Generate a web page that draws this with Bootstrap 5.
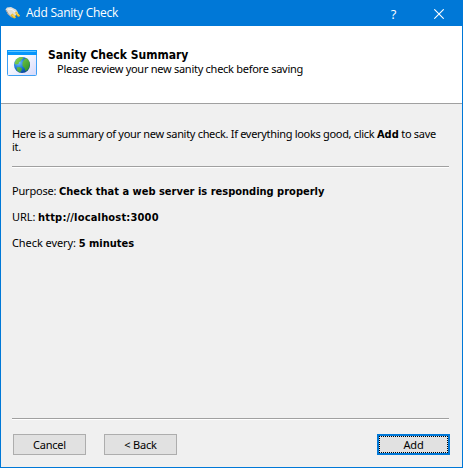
<!DOCTYPE html>
<html lang="en">
<head>
<meta charset="utf-8">
<meta name="viewport" content="width=device-width, initial-scale=1">
<title>Add Sanity Check</title>
<link href="https://cdn.jsdelivr.net/npm/bootstrap@5.3.0/dist/css/bootstrap.min.css" rel="stylesheet">
<style>
body { font: 11px/13px "Noto Sans", sans-serif; letter-spacing: -.31px; color: #000; background: #f0f0f0; overflow: hidden; }
strong { font-family: "DejaVu Sans Condensed", "DejaVu Sans", sans-serif; font-stretch: condensed; font-weight: 700; font-size: 11px; line-height: 0; letter-spacing: 0; }
.window { width: 463px; height: 468px; border: 1px solid #0078d7; }
.titlebar { height: 25px; background: #0078d7; color: #fff; font: 12px/24px "Open Sans", sans-serif; letter-spacing: -.25px; padding: 0 1px 0 4px; }
.titlebar .caption { margin-left: 5px; }
.tool { width: 45px; height: 25px; border: 0; padding: 0; background: none; color: #fff; font-size: 13px; line-height: 24px; }
.banner { height: 78px; background: #fff; border-bottom: 1px solid #a0a0a0; padding: 22px 6px 0; }
.heading-row { padding-left: 11px; height: 14px; }
.subheading-row { padding-left: 20px; letter-spacing: -.27px; }
.heading { font-size: 12px; letter-spacing: 0; }
.content { padding: 23px 13px 0 11px; }
.content p { margin: 0 0 13px; white-space: nowrap; }
.content .rule + p { margin-top: 16px; }
.field { letter-spacing: -.2px; }
.field-wide { letter-spacing: -.08px; }
.url { letter-spacing: .18px; }
.rule { height: 2px; background: #a0a0a0; border-bottom: 1px solid #fff; }
.footer-rule { margin: 0 13px 0 11px; }
.actions { padding: 14px 12px 12px; gap: 18px; }
.action { width: 73px; height: 21px; padding: 0; border: 1px solid #adadad; border-radius: 0; background: #e1e1e1; color: #000; font-size: 11px; line-height: 18px; letter-spacing: -.2px; }
.action.primary { border: 2px solid #0078d7; line-height: 15px; outline: 1px dotted #000; outline-offset: -3px; }
</style>
</head>
<body>
<div class="window d-flex flex-column">
  <header class="titlebar d-flex align-items-start flex-shrink-0">
    <svg class="mt-1" width="16" height="16" viewBox="0 0 16 16" aria-hidden="true">
      <path d="M.5 4.500L2 2.500l4-.5 5 2.500 2 3-2.500 3-3.500 2-4-3z" fill="#deddd8"/><path d="M1 5l3 5 3 2" stroke="#9a9a98" fill="none"/><path d="M3 4l4 .5 3 2.500" stroke="#f6f6f4" fill="none"/>
      <path d="M5.500 10l2-1.500 3.500 3.500-1 1.500-2-.5zM10 7.500l1.500-1 3.500 4-1 1.500-2-1z" fill="#eab51c"/><path d="M7 9.500l3 3M11 7.500l3 3" stroke="#ffe978"/>
    </svg>
    <span class="caption flex-grow-1">Add Sanity Check</span>
    <button class="tool" type="button" aria-label="Help">?</button>
    <button class="tool d-flex align-items-center justify-content-center" type="button" aria-label="Close"><svg width="10" height="10" viewBox="0 0 10 10"><path d="M.3.3l9.400 9.400M9.700.3L.3 9.700" stroke="#fff" stroke-width="1.100"/></svg></button>
  </header>
  <section class="banner d-flex flex-shrink-0">
    <svg class="flex-shrink-0" width="30" height="28" viewBox="0 0 30 28" aria-hidden="true">
      <defs>
        <linearGradient id="pane" x1="0" y1="0" x2="1" y2="1"><stop offset=".3" stop-color="#fff"/><stop offset="1" stop-color="#d5d9fb"/></linearGradient>
        <radialGradient id="sea" cx=".3" cy=".35" r=".75"><stop stop-color="#7cc4fa"/><stop offset=".5" stop-color="#1b78d8"/><stop offset="1" stop-color="#063a90"/></radialGradient>
        <linearGradient id="land" x1="0" y1="0" x2="1" y2="1"><stop stop-color="#8fdc55"/><stop offset="1" stop-color="#258a25"/></linearGradient>
      </defs>
      <rect x=".5" y="2.500" width="29" height="25" rx="1" fill="url(#pane)" stroke="#3da0f5"/>
      <path d="M0 2h30v5H0z" fill="#0796fb"/><path d="M1 3.500h28" stroke="#5cc4ff"/>
      <circle cx="15" cy="17" r="8" fill="url(#sea)"/>
      <path d="M7.500 15l2-4 3-1.800 3-.2 1 1.500-2 1-1 2-1.500.5-.5 2-3 .5zM15.500 14.500l2-3.500 2.500-1 2.500 4 .3 3-1.300 4-3 2.500-1-3.500-2-2zM9.500 19.500l3-.5 2.500 1.500-.5 2-1.500 2-2.500-1.500z" fill="url(#land)"/>
    </svg>
    <div class="text-nowrap">
      <div class="heading-row"><strong class="heading">Sanity Check Summary</strong></div>
      <div class="subheading-row">Please review your new sanity check before saving</div>
    </div>
  </section>
  <main class="content flex-grow-1">
    <p>Here is a summary of your new sanity check. If everything looks good, click <strong>Add</strong> to save<br>it.</p>
    <div class="rule"></div>
    <p class="field">Purpose: <strong>Check that a web server is responding properly</strong></p>
    <p class="field-wide">URL: <strong class="url">http://localhost:3000</strong></p>
    <p class="field-wide">Check every: <strong>5 minutes</strong></p>
  </main>
  <footer class="flex-shrink-0">
    <div class="rule footer-rule"></div>
    <div class="actions d-flex">
      <button class="btn action" type="button">Cancel</button>
      <button class="btn action" type="button">&lt; Back</button>
      <button class="btn action primary ms-auto" type="button">Add</button>
    </div>
  </footer>
</div>
<script src="https://cdn.jsdelivr.net/npm/bootstrap@5.3.0/dist/js/bootstrap.bundle.min.js"></script>
</body>
</html>
